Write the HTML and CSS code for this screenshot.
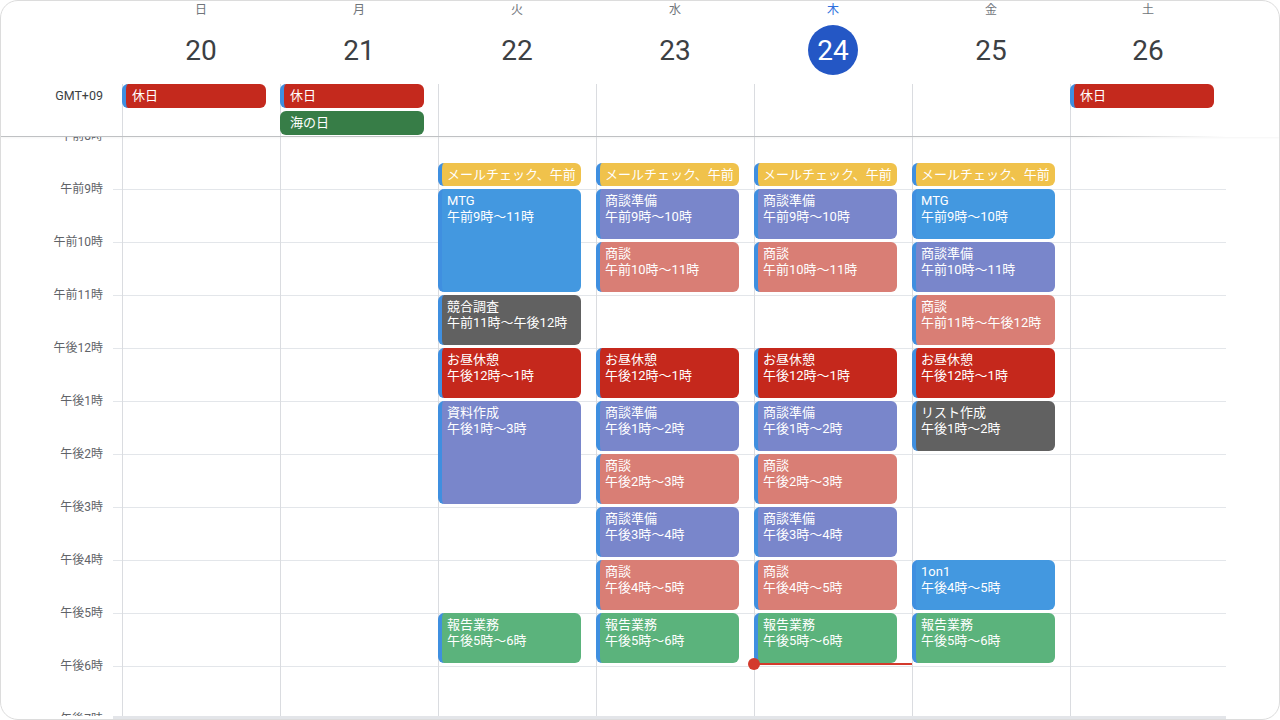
FILE: index.html
```html
<!DOCTYPE html>
<html lang="ja">
<head>
<meta charset="utf-8">
<title>カレンダー</title>
<link rel="stylesheet" href="styles.css">
</head>
<body>
<div class="frame">
  <div class="header">
    <div class="row dayhead">
      <div class="gutter"></div>
      <div class="dh"><div class="dname">日</div><div class="dnum">20</div></div>
      <div class="dh"><div class="dname">月</div><div class="dnum">21</div></div>
      <div class="dh"><div class="dname">火</div><div class="dnum">22</div></div>
      <div class="dh"><div class="dname">水</div><div class="dnum">23</div></div>
      <div class="dh today"><div class="dname">木</div><div class="dnum">24</div></div>
      <div class="dh"><div class="dname">金</div><div class="dnum">25</div></div>
      <div class="dh"><div class="dname">土</div><div class="dnum">26</div></div>
    </div>
    <div class="row allday">
      <div class="gutter tz">GMT+09</div>
      <div class="ad"><div class="ade holiday">休日</div></div>
      <div class="ad"><div class="ade holiday">休日</div><div class="ade national">海の日</div></div>
      <div class="ad"></div>
      <div class="ad"></div>
      <div class="ad"></div>
      <div class="ad"></div>
      <div class="ad"><div class="ade holiday">休日</div></div>
    </div>
  </div>
  <div class="header-line"></div>
  <div class="body">
    <div class="grid">
      <div class="labels">
        <div class="lbl">午前8時</div>
        <div class="lbl">午前9時</div>
        <div class="lbl">午前10時</div>
        <div class="lbl">午前11時</div>
        <div class="lbl">午後12時</div>
        <div class="lbl">午後1時</div>
        <div class="lbl">午後2時</div>
        <div class="lbl">午後3時</div>
        <div class="lbl">午後4時</div>
        <div class="lbl">午後5時</div>
        <div class="lbl">午後6時</div>
        <div class="lbl">午後7時</div>
      </div>
      <div class="day"></div>
      <div class="day"></div>
      <div class="day">
        <div class="ev yellow" style="grid-row: 2 / span 1"><span class="clip">メールチェック、午前8:30</span></div>
        <div class="ev blue" style="grid-row: 3 / span 4"><div>MTG</div><div>午前9時～11時</div></div>
        <div class="ev gray" style="grid-row: 7 / span 2"><div>競合調査</div><div>午前11時～午後12時</div></div>
        <div class="ev red" style="grid-row: 9 / span 2"><div>お昼休憩</div><div>午後12時～1時</div></div>
        <div class="ev purple" style="grid-row: 11 / span 4"><div>資料作成</div><div>午後1時～3時</div></div>
        <div class="ev green" style="grid-row: 19 / span 2"><div>報告業務</div><div>午後5時～6時</div></div>
      </div>
      <div class="day">
        <div class="ev yellow" style="grid-row: 2 / span 1"><span class="clip">メールチェック、午前8:30</span></div>
        <div class="ev purple" style="grid-row: 3 / span 2"><div>商談準備</div><div>午前9時～10時</div></div>
        <div class="ev salmon" style="grid-row: 5 / span 2"><div>商談</div><div>午前10時～11時</div></div>
        <div class="ev red" style="grid-row: 9 / span 2"><div>お昼休憩</div><div>午後12時～1時</div></div>
        <div class="ev purple" style="grid-row: 11 / span 2"><div>商談準備</div><div>午後1時～2時</div></div>
        <div class="ev salmon" style="grid-row: 13 / span 2"><div>商談</div><div>午後2時～3時</div></div>
        <div class="ev purple" style="grid-row: 15 / span 2"><div>商談準備</div><div>午後3時～4時</div></div>
        <div class="ev salmon" style="grid-row: 17 / span 2"><div>商談</div><div>午後4時～5時</div></div>
        <div class="ev green" style="grid-row: 19 / span 2"><div>報告業務</div><div>午後5時～6時</div></div>
      </div>
      <div class="day current">
        <div class="ev yellow" style="grid-row: 2 / span 1"><span class="clip">メールチェック、午前8:30</span></div>
        <div class="ev purple" style="grid-row: 3 / span 2"><div>商談準備</div><div>午前9時～10時</div></div>
        <div class="ev salmon" style="grid-row: 5 / span 2"><div>商談</div><div>午前10時～11時</div></div>
        <div class="ev red" style="grid-row: 9 / span 2"><div>お昼休憩</div><div>午後12時～1時</div></div>
        <div class="ev purple" style="grid-row: 11 / span 2"><div>商談準備</div><div>午後1時～2時</div></div>
        <div class="ev salmon" style="grid-row: 13 / span 2"><div>商談</div><div>午後2時～3時</div></div>
        <div class="ev purple" style="grid-row: 15 / span 2"><div>商談準備</div><div>午後3時～4時</div></div>
        <div class="ev salmon" style="grid-row: 17 / span 2"><div>商談</div><div>午後4時～5時</div></div>
        <div class="ev green" style="grid-row: 19 / span 2"><div>報告業務</div><div>午後5時～6時</div></div>
        <div class="now"></div>
      </div>
      <div class="day">
        <div class="ev yellow" style="grid-row: 2 / span 1"><span class="clip">メールチェック、午前8:30</span></div>
        <div class="ev blue" style="grid-row: 3 / span 2"><div>MTG</div><div>午前9時～10時</div></div>
        <div class="ev purple" style="grid-row: 5 / span 2"><div>商談準備</div><div>午前10時～11時</div></div>
        <div class="ev salmon" style="grid-row: 7 / span 2"><div>商談</div><div>午前11時～午後12時</div></div>
        <div class="ev red" style="grid-row: 9 / span 2"><div>お昼休憩</div><div>午後12時～1時</div></div>
        <div class="ev gray" style="grid-row: 11 / span 2"><div>リスト作成</div><div>午後1時～2時</div></div>
        <div class="ev blue" style="grid-row: 17 / span 2"><div>1on1</div><div>午後4時～5時</div></div>
        <div class="ev green" style="grid-row: 19 / span 2"><div>報告業務</div><div>午後5時～6時</div></div>
      </div>
      <div class="day"></div>
    </div>
  </div>
  <div class="bottom-strip"></div>
</div>
</body>
</html>
```

FILE: styles.css
```css
html, body {
  margin: 0;
  padding: 0;
  background: #ffffff;
}

body {
  font-family: Roboto, "Noto Sans CJK JP", "Noto Sans", sans-serif;
  color: #3c4043;
}

.frame {
  width: 1280px;
  height: 720px;
  box-sizing: border-box;
  border: 1px solid #dcdcdc;
  border-radius: 18px;
  overflow: hidden;
  background: #ffffff;
  display: flex;
  flex-direction: column;
}

.row {
  display: grid;
  grid-template-columns: 121px repeat(6, 158px) 156px;
}

.dayhead {
  height: 83px;
}

.dh {
  display: flex;
  flex-direction: column;
  align-items: center;
  padding-top: 1px;
}

.dname {
  font-size: 12px;
  line-height: 16px;
  color: #70757a;
}

.dnum {
  width: 50px;
  height: 50px;
  margin-top: 7px;
  border-radius: 50%;
  display: flex;
  align-items: center;
  justify-content: center;
  font-size: 28px;
  color: #3c4043;
}

.today .dname {
  color: #2f6fde;
}

.today .dnum {
  background: #2457c5;
  color: #ffffff;
}

.allday {
  height: 52px;
}

.tz {
  font-size: 12.5px;
  line-height: 24px;
  text-align: right;
  padding-right: 19px;
  color: #3c4043;
}

.ad {
  display: flex;
  flex-direction: column;
  gap: 3px;
  background: linear-gradient(to right, #dadce0 0, #dadce0 1px, transparent 1px);
}

.ade {
  width: 144px;
  height: 24px;
  box-sizing: border-box;
  border-radius: 6px;
  font-size: 13px;
  line-height: 24px;
  color: #ffffff;
  padding-left: 6px;
  white-space: nowrap;
  overflow: hidden;
}

.holiday {
  background: #c4291d;
  border-left: 4px solid #3f8fe0;
}

.national {
  background: #377d47;
  padding-left: 10px;
}

.header-line {
  height: 1px;
  flex: none;
  background: linear-gradient(to right, #bfc1c3 0, #bfc1c3 1080px, rgba(191, 193, 195, 0) 1225px);
  box-shadow: 0 1px 2px rgba(0, 0, 0, 0.06);
}

.body {
  flex: 1;
  overflow: hidden;
}

.grid {
  display: grid;
  grid-template-columns: 121px repeat(6, 158px) 156px;
  margin-top: -1px;
  background-image: linear-gradient(to bottom, #e3e6ea 0, #e3e6ea 1px, transparent 1px);
  background-size: 1113px 53px;
  background-position: 112px 0;
  background-repeat: repeat-y;
}

.labels {
  display: flex;
  flex-direction: column;
  margin-top: -8px;
}

.lbl {
  height: 53px;
  flex: none;
  font-size: 12px;
  line-height: 16px;
  text-align: right;
  padding-right: 19px;
  color: #5f6368;
}

.day {
  display: grid;
  grid-template-rows: repeat(24, 26.5px);
  grid-template-columns: 1fr;
  background: linear-gradient(to right, #dadce0 0, #dadce0 1px, transparent 1px);
}

.current {
  position: relative;
}

.ev {
  grid-column: 1;
  width: 143px;
  margin-bottom: 3px;
  box-sizing: border-box;
  border-radius: 6px;
  border-left: 4px solid #3f8fe0;
  padding: 4px 6px 0 5px;
  font-size: 13px;
  line-height: 16px;
  color: #ffffff;
  overflow: hidden;
  white-space: nowrap;
}

.clip {
  display: inline-block;
  max-width: 128px;
  overflow: hidden;
  vertical-align: top;
}

.yellow { background: #f0c24b; }
.blue { background: #4398e0; }
.purple { background: #7986cb; }
.salmon { background: #d97e75; }
.red { background: #c5281c; }
.gray { background: #616161; }
.green { background: #5bb37c; }

.now {
  position: absolute;
  left: 0;
  right: 0;
  top: 527px;
  height: 2px;
  background: #d33a2c;
}

.now::before {
  content: "";
  position: absolute;
  left: -6px;
  top: -5px;
  width: 12px;
  height: 12px;
  border-radius: 50%;
  background: #d33a2c;
}

.bottom-strip {
  flex: none;
  height: 3px;
  width: 1113px;
  margin-left: 112px;
  background: #e3e5e9;
}
```
